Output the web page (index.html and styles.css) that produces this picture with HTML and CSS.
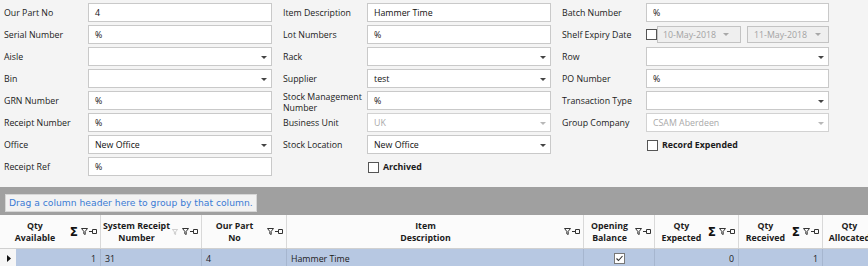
FILE: index.html
```html
<!DOCTYPE html>
<html>
<head>
<meta charset="utf-8">
<link rel="stylesheet" href="styles.css">
</head>
<body>

<div class="filters">
  <div class="group">
    <div class="lbl">Our Part No</div><div class="edit">4</div>
    <div class="lbl">Serial Number</div><div class="edit">%</div>
    <div class="lbl">Aisle</div><div class="edit"><span></span><span class="arrow"></span></div>
    <div class="lbl">Bin</div><div class="edit"><span></span><span class="arrow"></span></div>
    <div class="lbl">GRN Number</div><div class="edit">%</div>
    <div class="lbl">Receipt Number</div><div class="edit">%</div>
    <div class="lbl">Office</div><div class="edit"><span>New Office</span><span class="arrow"></span></div>
    <div class="lbl">Receipt Ref</div><div class="edit">%</div>
  </div>

  <div class="group">
    <div class="lbl">Item Description</div><div class="edit">Hammer Time</div>
    <div class="lbl">Lot Numbers</div><div class="edit">%</div>
    <div class="lbl">Rack</div><div class="edit"><span></span><span class="arrow"></span></div>
    <div class="lbl">Supplier</div><div class="edit"><span>test</span><span class="arrow"></span></div>
    <div class="lbl two">Stock Management Number</div><div class="edit">%</div>
    <div class="lbl">Business Unit</div><div class="edit off"><span>UK</span><span class="arrow"></span></div>
    <div class="lbl">Stock Location</div><div class="edit"><span>New Office</span><span class="arrow"></span></div>
    <div class="check-row"><span class="box"></span>Archived</div>
  </div>

  <div class="group last">
    <div class="lbl">Batch Number</div><div class="edit">%</div>
    <div class="lbl">Shelf Expiry Date</div>
    <div class="dates">
      <span class="box"></span>
      <div class="date first"><span>10-May-2018</span><span class="arrow"></span></div>
      <div class="date second"><span>11-May-2018</span><span class="arrow"></span></div>
    </div>
    <div class="lbl">Row</div><div class="edit"><span></span><span class="arrow"></span></div>
    <div class="lbl">PO Number</div><div class="edit">%</div>
    <div class="lbl">Transaction Type</div><div class="edit"><span></span><span class="arrow"></span></div>
    <div class="lbl">Group Company</div><div class="edit off"><span>CSAM Aberdeen</span><span class="arrow"></span></div>
    <div class="check-row"><span class="box"></span>Record Expended</div>
  </div>
</div>

<div class="grid">
  <div class="group-panel">
    <div class="group-hint">Drag a column header here to group by that column.</div>
  </div>

  <div class="head">
    <div class="hc w1"><div class="cap">Qty<br>Available</div>
      <div class="icons"><span class="sigma">Σ</span><svg class="funnel" width="7" height="7" viewBox="0 0 7 7"><path d="M0.5 0.5H6.5L4.2 3.4V6.5L2.8 5.8V3.4Z"/></svg><svg class="pin" width="8" height="5" viewBox="0 0 8 5"><path d="M0 2.5H3.5M3.5 0.5H7.5V4.5H3.5Z"/></svg></div></div>
    <div class="hc w2"><div class="cap">System Receipt<br>Number</div>
      <div class="icons"><svg class="funnel faded" width="6" height="6" viewBox="0 0 7 7"><path d="M0.5 0.5H6.5L4.2 3.4V6.5L2.8 5.8V3.4Z"/></svg><svg class="funnel" width="7" height="7" viewBox="0 0 7 7"><path d="M0.5 0.5H6.5L4.2 3.4V6.5L2.8 5.8V3.4Z"/></svg><svg class="pin" width="8" height="5" viewBox="0 0 8 5"><path d="M0 2.5H3.5M3.5 0.5H7.5V4.5H3.5Z"/></svg></div></div>
    <div class="hc w3"><div class="cap">Our Part<br>No</div>
      <div class="icons"><svg class="funnel" width="7" height="7" viewBox="0 0 7 7"><path d="M0.5 0.5H6.5L4.2 3.4V6.5L2.8 5.8V3.4Z"/></svg><svg class="pin" width="8" height="5" viewBox="0 0 8 5"><path d="M0 2.5H3.5M3.5 0.5H7.5V4.5H3.5Z"/></svg></div></div>
    <div class="hc w4"><div class="cap">Item<br>Description</div>
      <div class="icons"><svg class="funnel" width="7" height="7" viewBox="0 0 7 7"><path d="M0.5 0.5H6.5L4.2 3.4V6.5L2.8 5.8V3.4Z"/></svg><svg class="pin" width="8" height="5" viewBox="0 0 8 5"><path d="M0 2.5H3.5M3.5 0.5H7.5V4.5H3.5Z"/></svg></div></div>
    <div class="hc w5"><div class="cap">Opening<br>Balance</div>
      <div class="icons"><svg class="funnel" width="7" height="7" viewBox="0 0 7 7"><path d="M0.5 0.5H6.5L4.2 3.4V6.5L2.8 5.8V3.4Z"/></svg><svg class="pin" width="8" height="5" viewBox="0 0 8 5"><path d="M0 2.5H3.5M3.5 0.5H7.5V4.5H3.5Z"/></svg></div></div>
    <div class="hc w6"><div class="cap">Qty<br>Expected</div>
      <div class="icons"><span class="sigma">Σ</span><svg class="funnel" width="7" height="7" viewBox="0 0 7 7"><path d="M0.5 0.5H6.5L4.2 3.4V6.5L2.8 5.8V3.4Z"/></svg><svg class="pin" width="8" height="5" viewBox="0 0 8 5"><path d="M0 2.5H3.5M3.5 0.5H7.5V4.5H3.5Z"/></svg></div></div>
    <div class="hc w7"><div class="cap">Qty<br>Received</div>
      <div class="icons"><span class="sigma">Σ</span><svg class="funnel" width="7" height="7" viewBox="0 0 7 7"><path d="M0.5 0.5H6.5L4.2 3.4V6.5L2.8 5.8V3.4Z"/></svg><svg class="pin" width="8" height="5" viewBox="0 0 8 5"><path d="M0 2.5H3.5M3.5 0.5H7.5V4.5H3.5Z"/></svg></div></div>
    <div class="hc w8"><div class="cap">Qty<br>Allocated</div>
      <div class="icons"><span class="sigma">Σ</span><svg class="funnel" width="7" height="7" viewBox="0 0 7 7"><path d="M0.5 0.5H6.5L4.2 3.4V6.5L2.8 5.8V3.4Z"/></svg><svg class="pin" width="8" height="5" viewBox="0 0 8 5"><path d="M0 2.5H3.5M3.5 0.5H7.5V4.5H3.5Z"/></svg></div></div>
  </div>

  <div class="row">
    <div class="ind"><svg width="4" height="7" viewBox="0 0 4 7"><path d="M0 0L4 3.5L0 7Z"/></svg></div>
    <div class="cell w1d num">1</div>
    <div class="cell w2">31</div>
    <div class="cell w3">4</div>
    <div class="cell w4">Hammer Time</div>
    <div class="cell w5 mid"><svg width="11" height="11" viewBox="0 0 11 11"><rect x="0.5" y="0.5" width="10" height="10" fill="#fff" stroke="#777"/><path d="M2.5 5.5L4.5 7.5L8.5 3" fill="none" stroke="#333" stroke-width="1.1"/></svg></div>
    <div class="cell w6 num">0</div>
    <div class="cell w7 num">1</div>
    <div class="cell w8"></div>
  </div>
</div>

</body>
</html>
```

FILE: styles.css
```css
* {
  box-sizing: border-box;
}

body {
  margin: 0;
  width: 868px;
  height: 266px;
  overflow: hidden;
  background-color: #f4f4f4;
  font-family: "Open Sans", "Noto Sans", sans-serif;
  font-size: 8.8px;
  color: #1b1b1b;
}

/* filter form */
.filters {
  display: flex;
  gap: 11px;
  padding: 3px 0 0 4px;
  height: 187px;
}

.group {
  display: grid;
  grid-template-columns: 84px 184px;
  grid-auto-rows: 19px;
  row-gap: 3px;
  align-content: start;
}

.group.last {
  grid-template-columns: 84px 183px;
}

.lbl {
  display: flex;
  align-items: center;
  padding-top: 1px;
  white-space: nowrap;
}

.lbl.two {
  white-space: normal;
  line-height: 11px;
  padding-top: 4px;
}

.edit {
  display: flex;
  align-items: center;
  justify-content: space-between;
  background-color: #fff;
  border: 1px solid #c9c9c9;
  padding: 1px 4px 0 6px;
  color: #111;
}

.edit.off {
  color: #a9a9a9;
  border-color: #d2d2d2;
}

.arrow {
  width: 0;
  height: 0;
  border-left: 3px solid transparent;
  border-right: 3px solid transparent;
  border-top: 3px solid #444;
}

.edit.off .arrow {
  border-top-color: #b8b8b8;
}

.check-row {
  grid-column: 2;
  display: flex;
  align-items: center;
  gap: 4px;
  padding: 1px 0 0 1px;
  font-weight: bold;
}

.box {
  width: 11px;
  height: 11px;
  border: 1px solid #555;
  background-color: #fff;
  flex: none;
}

.dates {
  display: flex;
  align-items: center;
}

.date {
  display: flex;
  align-items: center;
  justify-content: space-between;
  height: 17px;
  background-color: #efefef;
  border: 1px solid #c3c3c3;
  color: #a3a3a3;
}

.date .arrow {
  border-top-color: #a8a8a8;
}

.date.first {
  width: 84px;
  padding: 0 11px 0 5px;
}

.date.second {
  width: 82px;
  margin-left: 6px;
  padding: 0 7px 0 6px;
}

/* grid */
.group-panel {
  height: 28px;
  background-color: #a0a0a0;
  padding: 7px 0 0 5px;
}

.group-hint {
  display: inline-block;
  height: 18px;
  line-height: 16px;
  padding: 0 3px;
  background-color: #f2f2f2;
  border: 1px solid #d6d6d6;
  color: #3a7bd5;
  font-family: "DejaVu Sans", sans-serif;
  font-size: 9.2px;
}

.head {
  display: flex;
  height: 34px;
  background-color: #fbfbfb;
  border-bottom: 1px solid #d0d0d0;
}

.hc {
  display: flex;
  align-items: center;
  flex: none;
  padding-right: 3px;
  border-right: 1px solid #d9d9d9;
  font-weight: bold;
  line-height: 12px;
}

.cap {
  flex: 1;
  text-align: center;
  white-space: nowrap;
}

.icons {
  display: flex;
  align-items: center;
  gap: 1px;
}

.sigma {
  font-family: "DejaVu Sans", sans-serif;
  font-weight: bold;
  font-size: 12px;
  line-height: 10px;
  margin-right: 2px;
  color: #111;
}

.funnel path,
.pin path {
  fill: none;
  stroke: #333;
  stroke-width: 1;
}

.funnel.faded {
  margin-right: 3px;
}

.funnel.faded path {
  stroke: #c4c4c4;
}

.w1 { width: 101px; }
.w2 { width: 101px; }
.w3 { width: 85px; }
.w4 { width: 297px; }
.w5 { width: 71px; }
.w6 { width: 84px; }
.w7 { width: 84px; }
.w8 { width: 84px; }
.w1d { width: 85px; }

.row {
  display: flex;
  height: 19px;
}

.ind {
  width: 16px;
  flex: none;
  display: flex;
  align-items: center;
  padding-left: 7px;
  background-color: #f6f6f6;
}

.ind path {
  fill: #111;
}

.cell {
  flex: none;
  display: flex;
  align-items: center;
  padding: 0 4px;
  background-color: #b7c8e2;
  border-right: 1px solid #a6b6cf;
  color: #1b1b1b;
  white-space: nowrap;
}

.cell.num {
  justify-content: flex-end;
}

.cell.mid {
  justify-content: center;
}
```
